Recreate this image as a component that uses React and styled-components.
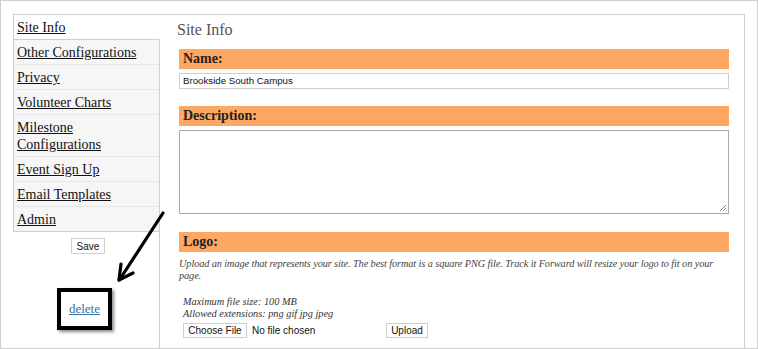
import React from "react";
import styled, { createGlobalStyle } from "styled-components";

const GlobalStyle = createGlobalStyle`
  html, body {
    margin: 0;
    padding: 0;
    background: #fff;
  }
  * {
    box-sizing: border-box;
  }
`;

const Frame = styled.div`
  position: relative;
  width: 758px;
  height: 349px;
  border: 1px solid #cfcfcf;
  padding: 13px 12px 0 12px;
  font-family: "Liberation Serif", Georgia, serif;
  color: #222;
  overflow: hidden;
`;

const Panel = styled.div`
  display: flex;
  height: 100%;
  border-top: 1px solid #cfcfcf;
  border-right: 1px solid #cfcfcf;
`;

const Sidebar = styled.div`
  display: flex;
  flex-direction: column;
  width: 147px;
  flex-shrink: 0;
`;

const NavList = styled.ul`
  list-style: none;
  margin: 0;
  padding: 0;
`;

const NavItem = styled.li`
  padding: 4px 4px 3px 3px;
  font-size: 14px;
  line-height: 17px;
  border-left: 1px solid #cfcfcf;
  border-bottom: 1px solid ${(p) => (p.$last || p.$active ? "#cfcfcf" : "#e6e6e6")};
  border-right: 1px solid ${(p) => (p.$active ? "transparent" : "#cfcfcf")};
  background: ${(p) => (p.$active ? "#fff" : "#f6f6f6")};

  a {
    color: #111;
    text-decoration: underline;
  }
`;

const SideRest = styled.div`
  flex: 1;
  display: flex;
  flex-direction: column;
  border-right: 1px solid #cfcfcf;
`;

const SaveButton = styled.button`
  align-self: center;
  margin: 6px 0 0 4px;
  width: 34px;
  height: 16px;
  padding: 0;
  border: 1px solid #cfcfcf;
  background: #fff;
  font-family: "Liberation Sans", Arial, sans-serif;
  font-size: 10px;
  color: #111;
`;

const DeleteBox = styled.div`
  display: flex;
  align-items: center;
  justify-content: center;
  width: 55px;
  height: 42px;
  margin: 34px 0 0 44px;
  border: 4px solid #000;
  box-shadow: 2px 2px 3px rgba(0, 0, 0, 0.45);
  background: #fff;

  a {
    color: #3a6e9c;
    font-size: 13px;
    text-decoration: underline;
  }
`;

const Main = styled.div`
  flex: 1;
  padding: 4px 15px 0 19px;
`;

const Title = styled.h2`
  margin: 0 0 8px -2px;
  font-size: 16px;
  line-height: 22px;
  font-weight: normal;
  color: #555;
`;

const Bar = styled.div`
  height: 20px;
  padding-left: 4px;
  background: #fda862;
  font-size: 14px;
  font-weight: bold;
  line-height: 20px;
  color: #222;
  margin-top: ${(p) => p.$gap || 0}px;
`;

const TextInput = styled.div`
  margin-top: 4px;
  height: 16px;
  border: 1px solid #cfcfcf;
  padding-left: 3px;
  font-family: "Liberation Sans", Arial, sans-serif;
  font-size: 9.7px;
  line-height: 14px;
  color: #111;
`;

const TextArea = styled.div`
  position: relative;
  margin-top: 4px;
  height: 84px;
  border: 1px solid #a8a8a8;
`;

const Grip = styled.svg`
  position: absolute;
  right: 1px;
  bottom: 1px;
`;

const Hint = styled.p`
  margin: 6px 0 0 0;
  font-size: 10.3px;
  letter-spacing: -0.1px;
  line-height: 12px;
  font-style: italic;
  color: #444;
`;

const Limits = styled.p`
  margin: 14px 0 0 4px;
  font-size: 10.3px;
  line-height: 12px;
  font-style: italic;
  color: #333;
`;

const FileRow = styled.div`
  display: flex;
  align-items: center;
  margin: 3px 0 0 4px;
  font-family: "Liberation Sans", Arial, sans-serif;
  font-size: 10px;
  color: #111;
`;

const FormButton = styled.button`
  width: ${(p) => p.$width}px;
  height: 15px;
  padding: 0;
  border: 1px solid #cfcfcf;
  background: #fff;
  font-family: "Liberation Sans", Arial, sans-serif;
  font-size: 10px;
  line-height: 13px;
  color: #111;
`;

const FileName = styled.span`
  width: 139px;
  padding-left: 5px;
`;

const Arrow = styled.svg`
  position: absolute;
  left: 108px;
  top: 205px;
`;

const navItems = [
  "Site Info",
  "Other Configurations",
  "Privacy",
  "Volunteer Charts",
  "Milestone Configurations",
  "Event Sign Up",
  "Email Templates",
  "Admin",
];

const App = () => {
  return (
    <>
      <GlobalStyle />
      <Frame>
        <Panel>
          <Sidebar>
            <NavList>
              {navItems.map((item, i) => (
                <NavItem
                  key={item}
                  $active={i === 0}
                  $last={i === navItems.length - 1}
                >
                  <a href="#">{item}</a>
                </NavItem>
              ))}
            </NavList>
            <SideRest>
              <SaveButton>Save</SaveButton>
              <DeleteBox>
                <a href="#">delete</a>
              </DeleteBox>
            </SideRest>
          </Sidebar>
          <Main>
            <Title>Site Info</Title>
            <Bar>Name:</Bar>
            <TextInput>Brookside South Campus</TextInput>
            <Bar $gap={17}>Description:</Bar>
            <TextArea>
              <Grip width="8" height="8" viewBox="0 0 8 8">
                <path d="M7 1 L1 7 M7 4 L4 7" stroke="#888" strokeWidth="1" />
              </Grip>
            </TextArea>
            <Bar $gap={18}>Logo:</Bar>
            <Hint>
              Upload an image that represents your site. The best format is a
              square PNG file. Track it Forward will resize your logo to fit on
              your page.
            </Hint>
            <Limits>
              Maximum file size: 100 MB
              <br />
              Allowed extensions: png gif jpg jpeg
            </Limits>
            <FileRow>
              <FormButton $width={64}>Choose File</FormButton>
              <FileName>No file chosen</FileName>
              <FormButton $width={42}>Upload</FormButton>
            </FileRow>
          </Main>
        </Panel>
        <Arrow width="62" height="80" viewBox="0 0 62 80">
          <g stroke="#000" strokeWidth="3.2" strokeLinecap="round" fill="none">
            <path d="M54 7 L11 73" />
            <path d="M10 74 L12 58" />
            <path d="M10 74 L24 67" />
          </g>
        </Arrow>
      </Frame>
    </>
  );
};

export default App;
